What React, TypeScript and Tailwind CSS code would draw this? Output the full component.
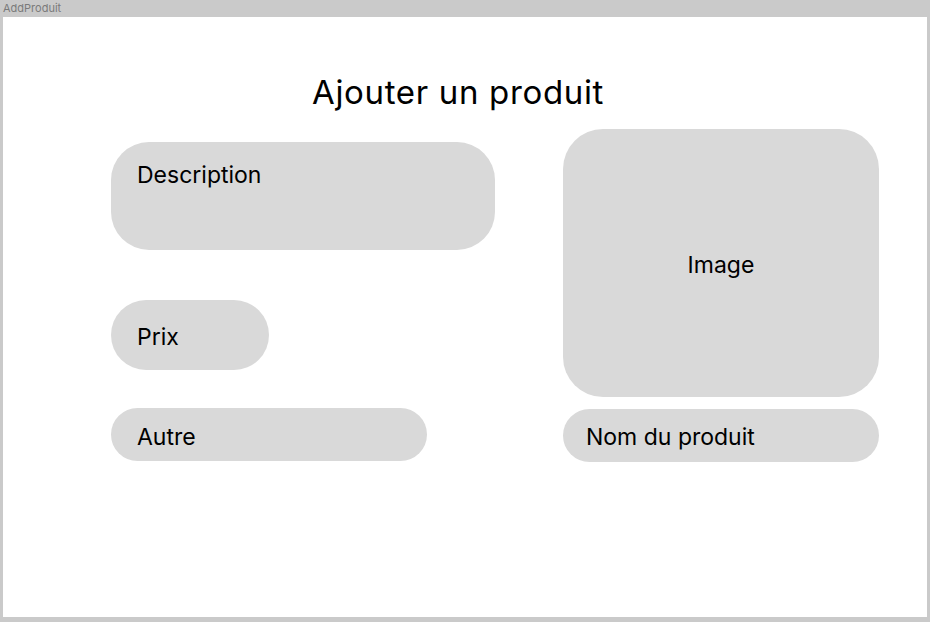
import React from "react";

const font = { fontFamily: "Inter, 'Noto Sans', sans-serif" };

export default function App() {
  return (
    <div className="w-[930px] h-[622px] bg-[#cacaca] flex flex-col" style={font}>
      <div className="h-[17px] pl-[3px] text-[11px] leading-[16px] text-[#7a7a7a]">AddProduit</div>
      <div className="mx-[3px] h-[600px] bg-white flex flex-col">
        <div className="pt-[59px] pl-[309px] text-[33px] leading-[33px] tracking-[0.02em] text-black">Ajouter un produit</div>
        <div className="flex items-start mt-[20px]">
          <div className="ml-[108px] w-[384px] flex flex-col items-start mt-[13px]">
            <div className="w-[384px] h-[108px] bg-[#d9d9d9] rounded-[38px] pl-[26px] pt-[22px] text-[23px] leading-[23px] text-black">
              Description
            </div>
            <div className="mt-[50px] w-[158px] h-[70px] bg-[#d9d9d9] rounded-full pl-[26px] pt-[5px] flex items-center text-[23px] leading-[23px] text-black">
              Prix
            </div>
            <div className="mt-[38px] w-[316px] h-[53px] bg-[#d9d9d9] rounded-full pl-[26px] pt-[5px] flex items-center text-[23px] leading-[23px] text-black">
              Autre
            </div>
          </div>
          <div className="ml-[68px] w-[316px] flex flex-col">
            <div className="h-[268px] bg-[#d9d9d9] rounded-[40px] flex items-center justify-center pt-[5px] text-[23px] leading-[23px] text-black">
              Image
            </div>
            <div className="mt-[12px] h-[53px] bg-[#d9d9d9] rounded-full pl-[23px] pt-[3px] flex items-center text-[23px] leading-[23px] text-black">
              Nom du produit
            </div>
          </div>
        </div>
      </div>
    </div>
  );
}
